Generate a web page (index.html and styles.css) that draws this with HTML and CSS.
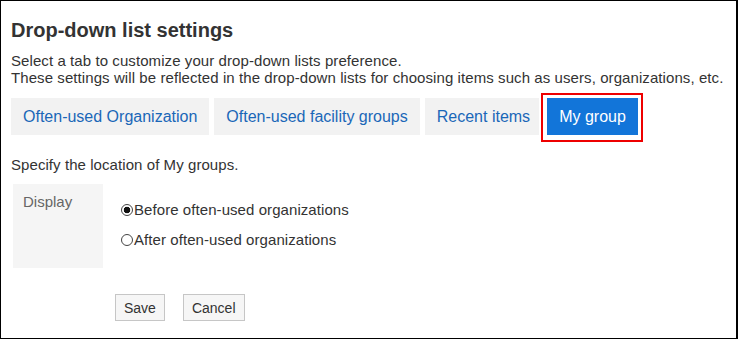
FILE: index.html
```html
<!DOCTYPE html>
<html>
<head>
<meta charset="utf-8">
<link rel="stylesheet" href="styles.css">
</head>
<body>
<div class="frame">
  <h1 class="title">Drop-down list settings</h1>
  <p class="desc">Select a tab to customize your drop-down lists preference.<br>These settings will be reflected in the drop-down lists for choosing items such as users, organizations, etc.</p>
  <div class="tabs">
    <span class="tab">Often-used Organization</span>
    <span class="tab">Often-used facility groups</span>
    <span class="tab">Recent items</span>
    <span class="tab tab-active">My group</span>
  </div>
  <p class="note">Specify the location of My groups.</p>
  <div class="setting">
    <div class="setting-label">Display</div>
    <div class="setting-value">
      <label class="option"><input type="radio" name="pos" class="radio" checked>Before often-used organizations</label>
      <label class="option"><input type="radio" name="pos" class="radio">After often-used organizations</label>
    </div>
  </div>
  <div class="actions">
    <button class="btn">Save</button>
    <button class="btn">Cancel</button>
  </div>
</div>
</body>
</html>
```

FILE: styles.css
```css
html, body {
  margin: 0;
  padding: 0;
  background: #fff;
}
body {
  font-family: "Liberation Sans", Arial, sans-serif;
  color: #333;
}
.frame {
  box-sizing: border-box;
  width: 738px;
  height: 339px;
  border: 1px solid #000;
  border-right-width: 2px;
  padding: 17px 0 0 10px;
}
.title {
  margin: 0;
  font-size: 20px;
  line-height: 24px;
  font-weight: bold;
  color: #333;
}
.desc {
  margin: 10px 0 0;
  font-size: 15px;
  line-height: 17px;
  letter-spacing: 0.08px;
}
.tabs {
  display: flex;
  gap: 5px;
  margin-top: 12px;
}
.tab {
  position: relative;
  display: block;
  height: 37px;
  line-height: 37px;
  padding: 0 12px;
  font-size: 16px;
  background: #f2f2f2;
  color: #1a67b8;
  white-space: nowrap;
}
.tab-active {
  background: #1275d9;
  color: #fff;
  z-index: 1;
}
.tab-active::after {
  content: "";
  position: absolute;
  top: -5px;
  left: -6px;
  right: -5px;
  bottom: -7px;
  border: 2px solid #ee0000;
  box-shadow: 0 0 0 2px #fff;
}
.note {
  margin: 21px 0 0;
  font-size: 15px;
  line-height: 17px;
  letter-spacing: 0.07px;
}
.setting {
  display: flex;
  margin: 11px 0 0 2px;
  font-size: 15px;
}
.setting-label {
  box-sizing: border-box;
  width: 90px;
  padding: 9px 0 0 10px;
  line-height: 17px;
  background: #f5f5f5;
  color: #666;
}
.setting-value {
  padding: 11px 0 13px 18px;
}
.option {
  display: block;
  line-height: 30px;
  color: #333;
  letter-spacing: 0.07px;
}
.radio {
  appearance: none;
  -webkit-appearance: none;
  box-sizing: border-box;
  display: inline-block;
  width: 12px;
  height: 12px;
  margin: 0 1px 0 0;
  border: 1px solid #444;
  border-radius: 50%;
  background: #fff;
  vertical-align: -1px;
  position: relative;
}
.radio:checked {
  background: radial-gradient(circle, #111 0, #111 3px, #fff 3.6px);
}
.actions {
  display: flex;
  gap: 18px;
  margin: 26px 0 0 104px;
}
.btn {
  box-sizing: border-box;
  height: 27px;
  padding: 0 8px;
  border: 1px solid #c6c6c6;
  background: #f6f6f6;
  color: #333;
  font-family: "Liberation Sans", Arial, sans-serif;
  font-size: 14px;
  border-radius: 0;
}
```
